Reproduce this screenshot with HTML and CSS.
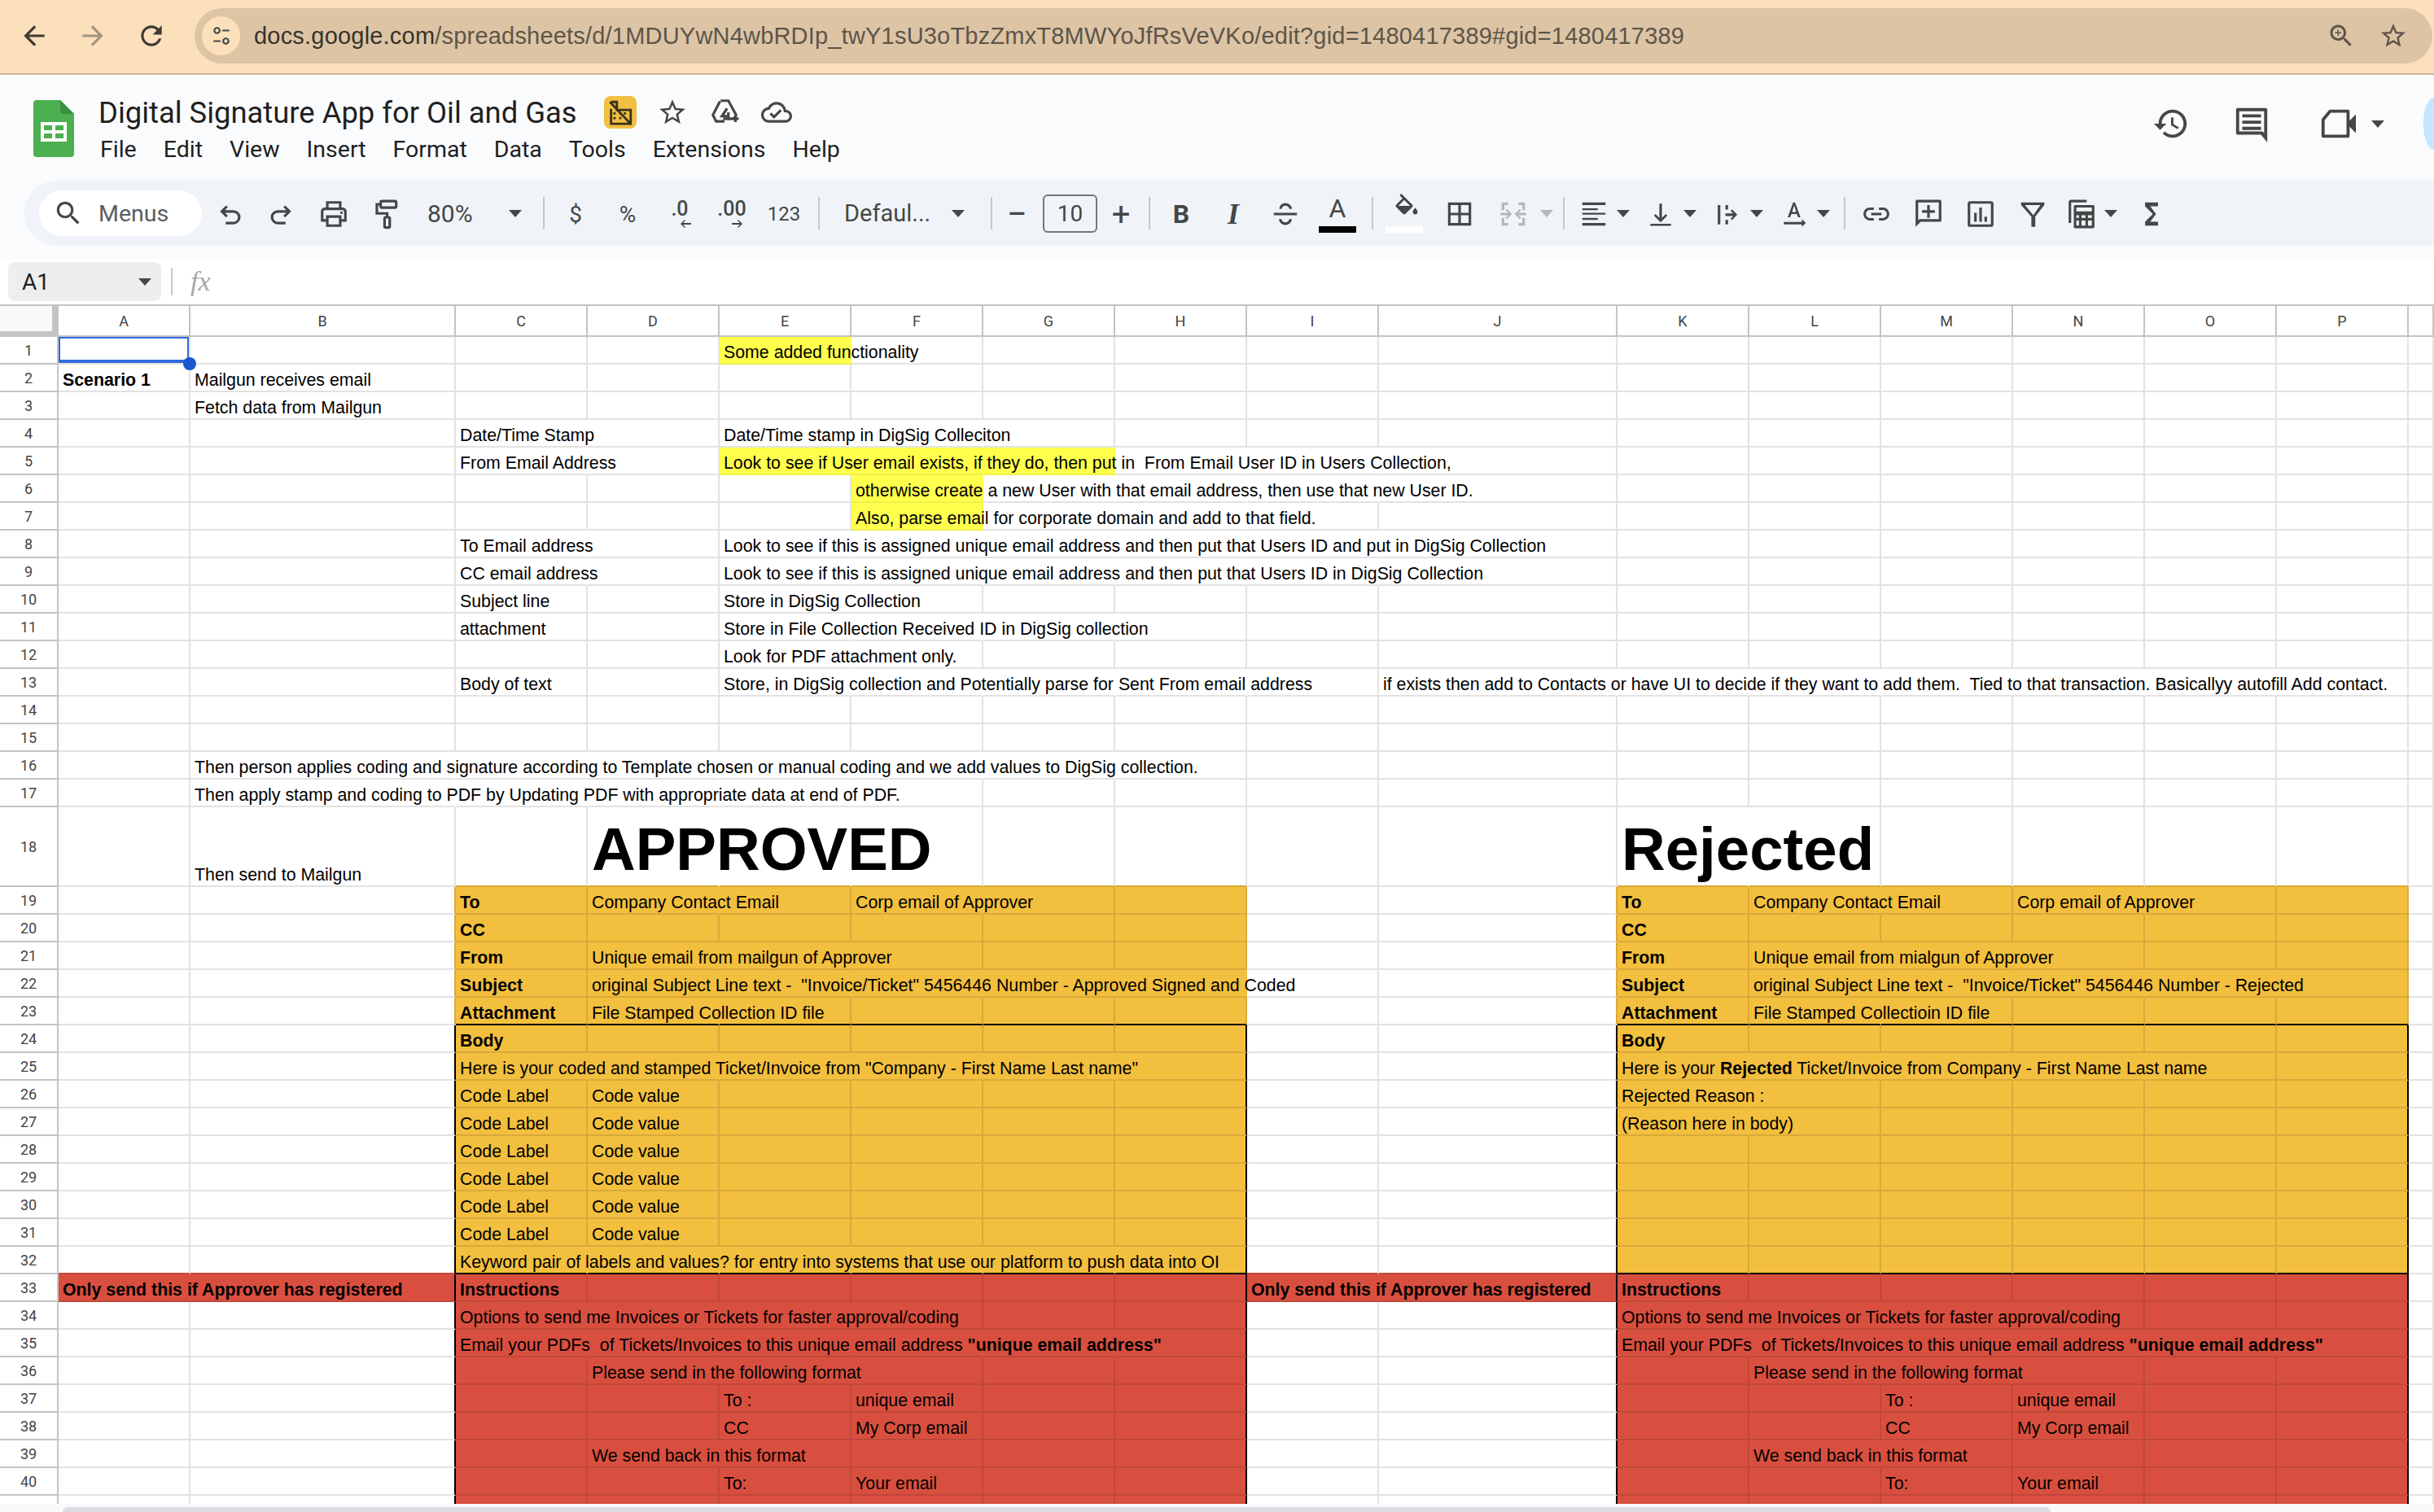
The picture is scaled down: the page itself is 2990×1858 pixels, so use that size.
FILE: index.html
```html
<!DOCTYPE html>
<html lang="en">
<head>
    <meta charset="UTF-8">
    <title>Digital Signature App for Oil and Gas - Google Sheets</title>
    <link rel="stylesheet" href="styles.css">
</head>
<body>
    <header class="browser-bar">
        <button class="nav-btn"><svg class="ic" viewBox="0 0 24 24"><path d="M20 11H7.83l5.59-5.59L12 4l-8 8 8 8 1.41-1.41L7.83 13H20v-2z"/></svg></button>
        <button class="nav-btn muted"><svg class="ic" viewBox="0 0 24 24"><path d="M12 4l-1.41 1.41L16.17 11H4v2h12.17l-5.58 5.59L12 20l8-8z"/></svg></button>
        <button class="nav-btn"><svg class="ic" viewBox="0 0 24 24"><path d="M17.65 6.35C16.2 4.9 14.21 4 12 4c-4.42 0-7.99 3.58-7.99 8s3.57 8 7.99 8c3.73 0 6.84-2.55 7.73-6h-2.08c-.82 2.33-3.04 4-5.65 4-3.31 0-6-2.69-6-6s2.69-6 6-6c1.66 0 3.14.69 4.22 1.78L13 11h7V4l-2.35 2.35z"/></svg></button>
        <div class="address">
            <span class="site-info"><svg class="ic-sm" viewBox="0 0 24 24"><g class="line"><circle cx="7" cy="6" r="3"/><path d="M13 6h8M3 18h8"/><circle cx="17" cy="18" r="3"/></g></svg></span>
            <span class="url"><span class="host">docs.google.com</span>/spreadsheets/d/1MDUYwN4wbRDIp_twY1sU3oTbzZmxT8MWYoJfRsVeVKo/edit?gid=1480417389#gid=1480417389</span>
            <button class="addr-btn"><svg class="ic-addr" viewBox="0 0 24 24"><path d="M15.5 14h-.79l-.28-.27C15.41 12.59 16 11.11 16 9.5 16 5.91 13.09 3 9.5 3S3 5.91 3 9.5 5.91 16 9.5 16c1.61 0 3.09-.59 4.23-1.57l.27.28v.79l5 4.99L20.49 19l-4.99-5zm-6 0C7.01 14 5 11.99 5 9.5S7.01 5 9.5 5 14 7.01 14 9.5 11.99 14 9.5 14zm2.5-4h-2v2H9v-2H7V9h2V7h1v2h2v1z"/></svg></button>
            <button class="addr-btn"><svg class="ic-addr" viewBox="0 0 24 24"><path d="M22 9.24l-7.19-.62L12 2 9.19 8.63 2 9.24l5.46 4.73L5.82 21 12 17.27 18.18 21l-1.63-7.03L22 9.24zM12 15.4l-3.76 2.27 1-4.28-3.32-2.88 4.38-.38L12 6.1l1.71 4.04 4.38.38-3.32 2.88 1 4.28L12 15.4z"/></svg></button>
        </div>
    </header>

    <section class="doc-head">
        <div class="doc-bar">
            <svg class="sheets-logo" viewBox="0 0 50 70">
                <path fill="#4caf50" d="M4 0h29l17 17v49a4 4 0 0 1-4 4H4a4 4 0 0 1-4-4V4a4 4 0 0 1 4-4z"/>
                <path fill="#3a9140" d="M33 0l17 17H37a4 4 0 0 1-4-4z"/>
                <path fill="#fff" fill-rule="evenodd" d="M9 27h32v24H9zM13 31v6h10v-6zm14 0v6h10v-6zM13 41v6h10v-6zm14 0v6h10v-6z"/>
            </svg>
            <div class="doc-titles">
                <div class="title-row">
                    <span class="doc-title">Digital Signature App for Oil and Gas</span>
                    <span class="badge"><svg class="ic-badge" viewBox="0 0 24 24"><g class="line dark"><path d="M3 3l18 19"/><path d="M4 9v13h17V10H9V3H4"/></g><path d="M6 12h2v2H6zM6 16h2v2H6zM11 16h2v2h-2zM15 12h2v2h-2zM11 12h2v2h-2z"/></svg></span>
                    <button class="head-btn"><svg class="ic" viewBox="0 0 24 24"><path d="M22 9.24l-7.19-.62L12 2 9.19 8.63 2 9.24l5.46 4.73L5.82 21 12 17.27 18.18 21l-1.63-7.03L22 9.24zM12 15.4l-3.76 2.27 1-4.28-3.32-2.88 4.38-.38L12 6.1l1.71 4.04 4.38.38-3.32 2.88 1 4.28L12 15.4z"/></svg></button>
                    <button class="head-btn"><svg class="ic" viewBox="0 0 24 24"><g class="line"><path d="M9 3h6l6 11-1.5 3H11M8.5 3.5L3 14l2.500 5H12"/><path d="M14 9l-4 6h6M15 12v6M18 17h5M20.500 14.500v5"/></g></svg></button>
                    <button class="head-btn"><svg class="ic" viewBox="0 0 24 24"><path d="M19.35 10.04C18.67 6.59 15.64 4 12 4 9.11 4 6.6 5.64 5.35 8.04 2.34 8.36 0 10.91 0 14c0 3.31 2.69 6 6 6h13c2.76 0 5-2.24 5-5 0-2.64-2.05-4.78-4.65-4.96zM19 18H6c-2.21 0-4-1.79-4-4 0-2.05 1.53-3.76 3.56-3.97l1.07-.11.5-.95C8.08 7.14 9.94 6 12 6c2.62 0 4.88 1.86 5.39 4.43l.3 1.5 1.53.11c1.56.1 2.78 1.41 2.78 2.96 0 1.65-1.35 3-3 3zm-9-3.82l-2.09-2.09L6.5 13.5 10 17l6.01-6.01-1.41-1.41z"/></svg></button>
                </div>
                <nav class="menu">
                    <span>File</span><span>Edit</span><span>View</span><span>Insert</span><span>Format</span><span>Data</span><span>Tools</span><span>Extensions</span><span>Help</span>
                </nav>
            </div>
            <div class="doc-actions">
                <button class="action-btn"><svg class="ic-lg" viewBox="0 0 24 24"><path d="M13 3c-4.97 0-9 4.03-9 9H1l3.89 3.89.07.14L9 12H6c0-3.87 3.13-7 7-7s7 3.13 7 7-3.13 7-7 7c-1.93 0-3.68-.79-4.94-2.06l-1.42 1.42C8.27 19.99 10.51 21 13 21c4.97 0 9-4.03 9-9s-4.03-9-9-9zm-1 5v5l4.28 2.54.72-1.21-3.5-2.08V8H12z"/></svg></button>
                <button class="action-btn"><svg class="ic-lg" viewBox="0 0 24 24"><path d="M3 2h18a1 1 0 0 1 1 1v21l-4-5H3a1 1 0 0 1-1-1V3a1 1 0 0 1 1-1zm1 2v13h15l1 1V4zm2 2h12v2H6zm0 4h12v2H6zm0 4h12v2H6z"/></svg></button>
                <button class="video-btn"><svg class="ic-lg" viewBox="0 0 24 24"><path d="M7 3h12a1 1 0 0 1 1 1v6l4-4v12l-4-4v6a1 1 0 0 1-1 1H3a1 1 0 0 1-1-1V9zm1 2L4 9.800V19h14V5z"/></svg></button>
                <span class="caret video-caret"></span>
                <span class="avatar"></span>
            </div>
        </div>

        <div class="toolbar">
            <div class="menu-search">
                <svg class="ic" viewBox="0 0 24 24"><path d="M15.5 14h-.79l-.28-.27C15.41 12.59 16 11.11 16 9.5 16 5.91 13.09 3 9.5 3S3 5.91 3 9.5 5.91 16 9.5 16c1.61 0 3.09-.59 4.23-1.57l.27.28v.79l5 4.99L20.49 19l-4.99-5zm-6 0C7.01 14 5 11.99 5 9.5S7.01 5 9.5 5 14 7.01 14 9.5 11.99 14 9.5 14z"/></svg>
                <span>Menus</span>
            </div>
            <button class="tb"><svg class="ic" viewBox="0 0 24 24"><path class="line" d="M10 6L6 10l4 4M6 10h9a4.500 4.500 0 0 1 0 9H9"/></svg></button>
            <button class="tb"><svg class="ic" viewBox="0 0 24 24"><path class="line" d="M14 6l4 4-4 4M18 10H9a4.500 4.500 0 0 0 0 9h6"/></svg></button>
            <button class="tb"><svg class="ic" viewBox="0 0 24 24"><g class="line"><path d="M7 8V3h10v5M7 17H3v-7a2 2 0 0 1 2-2h14a2 2 0 0 1 2 2v7h-4M7 14h10v7H7z"/></g><circle cx="18" cy="11" r="1"/></svg></button>
            <button class="tb"><svg class="ic" viewBox="0 0 24 24"><g class="line"><rect x="8" y="2" width="12" height="5" rx="1"/><path d="M8 4.500H5v7h8v3"/><rect x="11" y="14.500" width="4" height="8" rx="1"/></g></svg></button>
            <div class="dropdown zoom-dd"><span>80%</span><span class="caret"></span></div>
            <span class="sep"></span>
            <button class="tb">$</button>
            <button class="tb">%</button>
            <button class="tb"><span class="dec">.0<svg viewBox="0 0 16 12"><path d="M7 1L2 6l5 5 1-1-3-3h10V5H5l3-3z"/></svg></span></button>
            <button class="tb"><span class="dec">.00<svg viewBox="0 0 16 12"><path d="M9 1l5 5-5 5-1-1 3-3H1V5h10L8 2z"/></svg></span></button>
            <button class="tb tb-num">123</button>
            <span class="sep"></span>
            <div class="dropdown font-dd"><span>Defaul...</span><span class="caret"></span></div>
            <span class="sep"></span>
            <button class="tb tb-thin">&minus;</button>
            <span class="size-box">10</span>
            <button class="tb tb-thin tb-plus">+</button>
            <span class="sep"></span>
            <button class="tb tb-bold">B</button>
            <button class="tb tb-italic">I</button>
            <button class="tb"><svg class="ic" viewBox="0 0 24 24"><g class="line"><path d="M3 12h18M16 8c0-2-2-3.500-4-3.500S8 6 8.500 8M8 16c0 2 2 3.500 4 3.500s4-1.500 4-3.500"/></g></svg></button>
            <button class="tb tb-color"><span class="letter">A</span><span class="color-bar"></span></button>
            <span class="sep sep-fill"></span>
            <button class="tb tb-color"><svg class="ic-fill" viewBox="0 0 24 24"><path d="M16.56 8.94L7.62 0 6.21 1.41l2.38 2.38-5.15 5.15c-.59.59-.59 1.54 0 2.12l5.5 5.5c.29.29.68.44 1.06.44s.77-.15 1.06-.44l5.5-5.5c.59-.58.59-1.53 0-2.120zM5.21 10L10 5.21 14.79 10H5.210zM19 11.500s-2 2.170-2 3.500c0 1.100.9 2 2 2s2-.9 2-2c0-1.330-2-3.500-2-3.500z"/><path d="M5 10h10l-5 5.500z"/></svg><span class="color-bar white"></span></button>
            <button class="tb tb-borders"><svg class="ic" viewBox="0 0 24 24"><path d="M3 3v18h18V3H3zm8 16H5v-6h6v6zm0-8H5V5h6v6zm8 8h-6v-6h6v6zm0-8h-6V5h6v6z"/></svg></button>
            <button class="tb tb-merge"><svg class="ic disabled" viewBox="0 0 24 24"><path d="M3 3h5v2H5v4H3zM16 3h5v6h-2V5h-3zM3 15h2v4h3v2H3zM19 15h2v6h-5v-2h3zM2 11h6l-2-2 1-1 4 4-4 4-1-1 2-2H2zM22 11h-6l2-2-1-1-4 4 4 4 1-1-2-2h6z"/></svg></button>
            <span class="caret caret-btn disabled-caret"></span>
            <span class="sep sep-after-merge"></span>
            <button class="tb tb-pair"><svg class="ic" viewBox="0 0 24 24"><path d="M3 3h18v2H3zM3 7.500h12v1.500H3zM3 11h18v1.500H3zM3 15h12v1.500H3zM3 19h18v2H3z"/></svg></button>
            <span class="caret caret-btn"></span>
            <button class="tb tb-pair next"><svg class="ic" viewBox="0 0 24 24"><path d="M11 4h2v11l3-3 1.200 1.200L12 18.400l-5.200-5.200L8 12l3 3zM4 19.500h16v1.700H4z"/></svg></button>
            <span class="caret caret-btn"></span>
            <button class="tb tb-pair next"><svg class="ic" viewBox="0 0 24 24"><path d="M4.500 5h2v15h-2zM10.500 5h2v3.500h-2zM10.500 16.500h2V20h-2zM10.500 11.500h6l-2-2 1-1.200 4.200 4.200-4.200 4.200-1-1.200 2-2h-6z"/></svg></button>
            <span class="caret caret-btn"></span>
            <button class="tb tb-pair next"><svg class="ic" viewBox="0 0 24 24"><path d="M12.700 3h-1.500L7 14.500h1.900l.9-2.500h4.300l.9 2.500h1.900zM10.400 10.400L12 5.400l1.600 5zM21 19l-3-3v2.200H4V20h14v2z"/></svg></button>
            <span class="caret caret-btn"></span>
            <span class="sep sep-before-link"></span>
            <button class="tb"><svg class="ic" viewBox="0 0 24 24"><path d="M3.900 12c0-1.710 1.390-3.100 3.100-3.100h3V7H7c-2.760 0-5 2.240-5 5s2.240 5 5 5h3v-1.900H7c-1.710 0-3.100-1.390-3.100-3.100zM8 13h8v-2H8v2zm9-6h-3v1.900h3c1.710 0 3.100 1.390 3.100 3.100s-1.390 3.100-3.100 3.100h-3V17h3c2.760 0 5-2.240 5-5s-2.240-5-5-5z"/></svg></button>
            <button class="tb"><svg class="ic" viewBox="0 0 24 24"><path d="M3 1h18a1 1 0 0 1 1 1v15a1 1 0 0 1-1 1H6l-4 4V2a1 1 0 0 1 1-1zm1 2v14l1-1h15V3zM11 5h2v4h4v2h-4v4h-2v-4H7V9h4z"/></svg></button>
            <button class="tb"><svg class="ic" viewBox="0 0 24 24"><path d="M4 2h16a2 2 0 0 1 2 2v16a2 2 0 0 1-2 2H4a2 2 0 0 1-2-2V4a2 2 0 0 1 2-2zm0 2v16h16V4zM7 11h2v7H7zM11 7h2v11h-2zM15 14h2v4h-2z"/></svg></button>
            <button class="tb"><svg class="ic" viewBox="0 0 24 24"><path d="M3 3h18v2l-7 9v8h-3v-8L3 5zm3 2l6.500 8L18 5z"/></svg></button>
            <button class="tb tb-pair"><svg class="ic" viewBox="0 0 24 24"><path d="M4 1h12v2H4v16H2V3a2 2 0 0 1 2-2zM7 5h14a1 1 0 0 1 1 1v16a1 1 0 0 1-1 1H7a1 1 0 0 1-1-1V6a1 1 0 0 1 1-1zm1 2v3h12V7zM8 13v2h2v-2zm4 0v2h3v-2zm5 0v2h3v-2zM8 17v4h2v-4zm4 0v4h3v-4zm5 0v4h3v-4z"/></svg></button>
            <span class="caret caret-btn"></span>
            <button class="tb tb-sigma"><svg class="ic" viewBox="0 0 24 24"><path d="M17 3H7v3l6 6-6 6v3h10v-3h-6l4.500-6L11 6h6z"/></svg></button>
        </div>
    </section>

    <div class="formula-bar">
        <div class="name-box"><span>A1</span><span class="caret"></span></div>
        <span class="formula-sep"></span>
        <span class="fx">fx</span>
    </div>

    <main class="grid-wrap">
        <table class="sheet">
            <colgroup id="sheet-cols"></colgroup>
            <thead><tr id="sheet-head"></tr></thead>
            <tbody id="sheet-body"></tbody>
        </table>
    </main>
    <div class="h-scroll"><span class="h-thumb"></span></div>

    <script>
        const columnNames = "ABCDEFGHIJKLMNOPQ".split("");
        const columnWidths = [162, 326, 162, 162, 162, 162, 162, 162, 162, 293, 162, 162, 162, 162, 162, 162, 31];
        const ORANGE_LEFT = "CDEFGH", ORANGE_RIGHT = "KLMNOP";

        const bold = (s) => "<b>" + s + "</b>";
        const registered = bold("Only send this if Approver has registered");
        const uniqueAddress = 'Email your PDFs  of Tickets/Invoices to this unique email address ' + bold('"unique email address"');

        const cells = {
            1: { E: "Some added functionality" },
            2: { A: bold("Scenario 1"), B: "Mailgun receives email" },
            3: { B: "Fetch data from Mailgun" },
            4: { C: "Date/Time Stamp", E: "Date/Time stamp in DigSig Colleciton" },
            5: { C: "From Email Address", E: "Look to see if User email exists, if they do, then put in  From Email User ID in Users Collection," },
            6: { F: "otherwise create a new User with that email address, then use that new User ID." },
            7: { F: "Also, parse email for corporate domain and add to that field." },
            8: { C: "To Email address", E: "Look to see if this is assigned unique email address and then put that Users ID and put in DigSig Collection" },
            9: { C: "CC email address", E: "Look to see if this is assigned unique email address and then put that Users ID in DigSig Collection" },
            10: { C: "Subject line", E: "Store in DigSig Collection" },
            11: { C: "attachment", E: "Store in File Collection Received ID in DigSig collection" },
            12: { E: "Look for PDF attachment only." },
            13: { C: "Body of text", E: "Store, in DigSig collection and Potentially parse for Sent From email address", J: "if exists then add to Contacts or have UI to decide if they want to add them.  Tied to that transaction. Basicallyy autofill Add contact." },
            16: { B: "Then person applies coding and signature according to Template chosen or manual coding and we add values to DigSig collection." },
            17: { B: "Then apply stamp and coding to PDF by Updating PDF with appropriate data at end of PDF." },
            18: { B: "Then send to Mailgun", D: '<span class="big">APPROVED</span>', K: '<span class="big">Rejected</span>' },
            19: { C: bold("To"), D: "Company Contact Email", F: "Corp email of Approver", K: bold("To"), L: "Company Contact Email", N: "Corp email of Approver" },
            20: { C: bold("CC"), K: bold("CC") },
            21: { C: bold("From"), D: "Unique email from mailgun of Approver", K: bold("From"), L: "Unique email from mialgun of Approver" },
            22: { C: bold("Subject"), D: 'original Subject Line text -  "Invoice/Ticket" 5456446 Number - Approved Signed and Coded', K: bold("Subject"), L: 'original Subject Line text -  "Invoice/Ticket" 5456446 Number - Rejected' },
            23: { C: bold("Attachment"), D: "File Stamped Collection ID file", K: bold("Attachment"), L: "File Stamped Collectioin ID file" },
            24: { C: bold("Body"), K: bold("Body") },
            25: { C: 'Here is your coded and stamped Ticket/Invoice from "Company - First Name Last name"', K: "Here is your " + bold("Rejected") + " Ticket/Invoice from Company - First Name Last name" },
            26: { C: "Code Label", D: "Code value", K: "Rejected Reason :" },
            27: { C: "Code Label", D: "Code value", K: "(Reason here in body)" },
            28: { C: "Code Label", D: "Code value" },
            29: { C: "Code Label", D: "Code value" },
            30: { C: "Code Label", D: "Code value" },
            31: { C: "Code Label", D: "Code value" },
            32: { C: "Keyword pair of labels and values? for entry into systems that use our platform to push data into OI" },
            33: { A: registered, C: bold("Instructions"), I: registered, K: bold("Instructions") },
            34: { C: "Options to send me Invoices or Tickets for faster approval/coding", K: "Options to send me Invoices or Tickets for faster approval/coding" },
            35: { C: uniqueAddress, K: uniqueAddress },
            36: { D: "Please send in the following format", L: "Please send in the following format" },
            37: { E: "To :", F: "unique email", M: "To :", N: "unique email" },
            38: { E: "CC", F: "My Corp email", M: "CC", N: "My Corp email" },
            39: { D: "We send back in this format", L: "We send back in this format" },
            40: { E: "To:", F: "Your email", M: "To:", N: "Your email" },
        };

        // background of a cell, by row and column letter
        function cellFill(row, col) {
            if (row === 1 && col === "E") return "yellow";
            if (row === 5 && "EFG".includes(col)) return "yellow";
            if ((row === 6 || row === 7) && col === "F") return "yellow";
            const inBlock = ORANGE_LEFT.includes(col) || ORANGE_RIGHT.includes(col);
            if (row >= 19 && row <= 32 && inBlock) return "orange";
            if (row >= 33 && inBlock) return "red";
            if (row === 33 && "ABIJ".includes(col)) return "red";
            return "";
        }

        function edgeClasses(row, col, idx) {
            let out = [];
            const next = columnNames[idx + 1];
            const fill = cellFill(row, col);
            if (row >= 24 && (next === "C" || next === "K" || col === "H" || col === "P")) out.push("right-black");
            else if (row >= 19 && row <= 23 && (next === "C" || next === "K")) out.push("right-orange");
            if ((row === 23 || row === 32) && fill === "orange") out.push("bottom-black");
            if (row === 18 && (ORANGE_LEFT.includes(col) || ORANGE_RIGHT.includes(col))) out.push("bottom-orange");
            if (row === 32 && "ABIJ".includes(col)) out.push("bottom-red");
            return out;
        }

        const colTags = document.getElementById("sheet-cols");
        const headRow = document.getElementById("sheet-head");
        const body = document.getElementById("sheet-body");

        colTags.innerHTML = '<col class="col-rowhead">';
        headRow.innerHTML = '<th class="corner"></th>';
        columnNames.forEach((name, i) => {
            let col = document.createElement("col");
            col.style.width = columnWidths[i] + "px";
            colTags.appendChild(col);
            let th = document.createElement("th");
            th.textContent = i < 16 ? name : "";
            headRow.appendChild(th);
        });

        for (let row = 1; row <= 41; row++) {
            let tr = document.createElement("tr");
            if (row === 18) tr.className = "tall";
            let rowHead = document.createElement("th");
            // row 41 is cut off by the scrollbar before its number shows
            rowHead.textContent = row < 41 ? row : "";
            tr.appendChild(rowHead);
            columnNames.forEach((col, idx) => {
                let td = document.createElement("td");
                let fill = cellFill(row, col);
                if (fill) td.classList.add(fill);
                td.classList.add(...edgeClasses(row, col, idx));
                if (row === 1 && col === "A") td.classList.add("selected");
                let content = (cells[row] || {})[col];
                if (content) td.innerHTML = '<span class="txt">' + content + "</span>";
                tr.appendChild(td);
            });
            body.appendChild(tr);
        }

        // text runs over empty neighbours and takes away their gridline, as in Sheets
        document.querySelectorAll("td .txt").forEach((txt) => {
            let cur = txt.parentElement;
            let room = cur.offsetWidth;
            while (txt.offsetWidth + 6 > room && cur.nextElementSibling && !cur.nextElementSibling.firstChild) {
                cur.classList.add("spill");
                cur = cur.nextElementSibling;
                room += cur.offsetWidth;
            }
        });
    </script>
</body>
</html>
```
FILE: styles.css
```css
* {
    box-sizing: border-box;
}
html, body {
    margin: 0;
    height: 100%;
}
body {
    display: flex;
    flex-direction: column;
    height: 1858px;
    overflow: hidden;
    background-color: #fff;
    font-family: Roboto, sans-serif;
    color: #444746;
}
button {
    border: none;
    background: none;
    padding: 0;
    margin: 0;
    display: flex;
    align-items: center;
    justify-content: center;
    font-family: inherit;
    font-size: inherit;
    color: inherit;
}
svg {
    fill: #444746;
    display: block;
}
.line path, .line circle, .line rect, path.line {
    fill: none;
    stroke: #444746;
    stroke-width: 2;
}
.ic {
    width: 38px;
    height: 38px;
}
.ic-lg {
    width: 46px;
    height: 46px;
}

/* browser chrome */
.browser-bar {
    flex: none;
    height: 92px;
    display: flex;
    align-items: flex-start;
    padding: 10px 2px 0 6px;
    background-color: #fce0bb;
    border-bottom: 2px solid #cdb596;
}
.nav-btn {
    width: 72px;
    height: 68px;
}
.nav-btn svg {
    fill: #3f3a33;
}
.nav-btn.muted svg {
    fill: #a39480;
}
.address {
    flex: 1;
    height: 68px;
    margin-left: 17px;
    padding: 0 16px 0 9px;
    display: flex;
    align-items: center;
    background-color: #dcc4a5;
    border-radius: 34px;
}
.site-info {
    width: 47px;
    height: 48px;
    display: flex;
    align-items: center;
    justify-content: center;
    border-radius: 24px;
    background-color: #fce0bb;
}
.ic-sm {
    width: 26px;
    height: 26px;
}
.url {
    margin-left: 17px;
    font-family: "Liberation Sans", sans-serif;
    font-size: 29px;
    letter-spacing: 0.2px;
    color: #5e5548;
    white-space: nowrap;
}
.host {
    color: #38322a;
}
.addr-btn {
    width: 64px;
    height: 48px;
}
.addr-btn:first-of-type {
    margin-left: auto;
}
.ic-addr {
    width: 36px;
    height: 36px;
    fill: #5e5548;
}

/* document header */
.doc-head {
    flex: none;
    height: 226px;
    background-color: #f9fbfd;
}
.doc-bar {
    height: 130px;
    display: flex;
    align-items: flex-start;
}
.sheets-logo {
    width: 50px;
    height: 70px;
    margin: 31px 0 0 41px;
}
.doc-titles {
    margin: 26px 0 0 30px;
}
.title-row {
    display: flex;
    align-items: center;
    height: 40px;
}
.doc-title {
    font-size: 36.4px;
    color: #1f1f1f;
    white-space: nowrap;
}
.badge {
    width: 40px;
    height: 40px;
    margin: 0 12px 0 33px;
    display: flex;
    align-items: center;
    justify-content: center;
    background-color: #f1bf42;
    border-radius: 8px;
}
.ic-badge {
    width: 34px;
    height: 34px;
    fill: #3a3320;
}
.line.dark path {
    stroke: #3a3320;
}
.head-btn {
    width: 64px;
    height: 40px;
}
.menu {
    margin-top: 5px;
    height: 40px;
    display: flex;
    align-items: center;
    gap: 33px;
    padding-left: 2px;
    font-size: 28.5px;
    color: #1f1f1f;
}
.doc-actions {
    margin-left: auto;
    padding-top: 28px;
    display: flex;
    align-items: center;
}
.action-btn {
    width: 99px;
    height: 64px;
}
.video-btn {
    width: 80px;
    height: 64px;
    margin-left: 16px;
}
.video-caret {
    margin: 0 48px 0 2px;
}
.avatar {
    width: 13px;
    height: 64px;
    background-color: #c2e7ff;
    border-radius: 13px 0 0 13px / 32px 0 0 32px;
}

/* toolbar */
.toolbar {
    height: 80px;
    margin-left: 30px;
    padding-left: 18px;
    display: flex;
    align-items: center;
    background-color: #f0f4f9;
    border-radius: 40px 0 0 40px;
    font-size: 28px;
    color: #444746;
}
.menu-search {
    width: 200px;
    height: 56px;
    margin-right: 2px;
    padding-left: 17px;
    display: flex;
    align-items: center;
    gap: 18px;
    background-color: #fff;
    border-radius: 28px;
    font-size: 28.5px;
    color: #5a5d5e;
}
.tb {
    flex: none;
    width: 64px;
    height: 56px;
    padding-top: 2px;
}
.tb-num {
    font-size: 24px;
    margin-right: 4px;
}
.tb-thin {
    width: 48px;
    font-size: 44px;
}
.tb-plus {
    margin: 0 4px 0 5px;
    font-size: 40px;
}
.tb-bold {
    font-size: 32px;
    font-weight: 700;
}
.tb-italic {
    font-family: "Liberation Serif", serif;
    font-size: 36px;
    font-weight: 700;
    font-style: italic;
}
.tb-color {
    flex-direction: column;
    justify-content: flex-start;
    height: 56px;
    padding-top: 4px;
}
.tb-color .letter {
    font-size: 32px;
    line-height: 36px;
    height: 40px;
}
.color-bar {
    width: 46px;
    height: 8px;
    background-color: #000;
}
.color-bar.white {
    background-color: #fff;
}
.ic-fill {
    width: 36px;
    height: 36px;
    margin: 0 0 4px 6px;
}
.tb-borders {
    margin: 0 3px 0 4px;
}
.disabled {
    fill: #b4b7ba;
}
.tb-merge {
    width: 62px;
}
.tb-pair {
    width: 56px;
}
.tb-pair.next {
    margin-left: 10px;
}
.tb-sigma {
    margin-left: 10px;
}
.dec {
    display: flex;
    flex-direction: column;
    align-items: center;
    font-size: 25px;
    font-weight: 500;
    line-height: 24px;
}
.dec svg {
    width: 18px;
    height: 12px;
    margin: 0 0 0 14px;
}
.dropdown {
    flex: none;
    display: flex;
    align-items: center;
    justify-content: space-between;
    height: 56px;
}
.zoom-dd {
    width: 155px;
    padding: 0 20px 0 19px;
    font-size: 30px;
}
.font-dd {
    width: 198px;
    padding: 0 26px 0 24px;
    font-size: 29px;
}
.caret {
    display: inline-block;
    width: 0;
    height: 0;
    border-left: 8px solid transparent;
    border-right: 8px solid transparent;
    border-top: 9px solid #444746;
}
.caret-btn {
    flex: none;
    margin: 0;
}
.disabled-caret {
    border-top-color: #b4b7ba;
    margin-left: 2px;
}
.sep {
    flex: none;
    width: 2px;
    height: 40px;
    margin: 0 6px;
    background-color: #c7c7c7;
}
.sep-fill {
    margin-left: 10px;
}
.sep-after-merge {
    margin: 0 8px 0 12px;
}
.sep-before-link {
    margin-left: 17px;
}
.size-box {
    flex: none;
    width: 67px;
    height: 47px;
    margin-left: 8px;
    display: flex;
    align-items: center;
    justify-content: center;
    border: 2px solid #747775;
    border-radius: 6px;
    font-size: 28px;
}

/* formula bar */
.formula-bar {
    flex: none;
    height: 56px;
    display: flex;
    align-items: center;
    background-color: #fff;
}
.name-box {
    width: 188px;
    height: 48px;
    margin-left: 10px;
    padding: 0 12px 0 17px;
    display: flex;
    align-items: center;
    justify-content: space-between;
    background-color: #eeeeee;
    border-radius: 8px;
    font-size: 28px;
    color: #1f1f1f;
}
.formula-sep {
    width: 2px;
    height: 34px;
    margin-left: 12px;
    background-color: #c7c7c7;
}
.fx {
    margin-left: 22px;
    font-family: "Liberation Serif", serif;
    font-style: italic;
    font-size: 34px;
    color: #a8a8a8;
}

/* sheet */
.grid-wrap {
    flex: 1;
    overflow: hidden;
    min-height: 0;
}
.sheet {
    table-layout: fixed;
    width: 2990px;
    border-collapse: separate;
    border-spacing: 0;
    font-family: "Liberation Sans", Arial, sans-serif;
    font-size: 21.33px;
    color: #000;
}
.col-rowhead {
    width: 72px;
}
.sheet thead th {
    height: 40px;
    border-top: 2px solid #c4c4c4;
    border-bottom: 2px solid #c4c4c4;
    border-right: 2px solid #c4c4c4;
    font-family: Roboto, sans-serif;
    font-size: 18px;
    font-weight: 400;
    color: #444;
    background-color: #fff;
}
.sheet thead th.corner {
    background-color: #f8f9fa;
    border-right: 8px solid #c4c4c4;
    border-bottom: 7px solid #c4c4c4;
}
.sheet tbody th {
    height: 34px;
    border-right: 2px solid #c4c4c4;
    border-bottom: 2px solid #c4c4c4;
    font-family: Roboto, sans-serif;
    font-size: 18px;
    font-weight: 400;
    color: #444;
    background-color: #fff;
}
.sheet tbody tr.tall th {
    height: 98px;
}
.sheet td {
    height: 34px;
    padding: 0 0 0 5px;
    border-right: 2px solid #e2e2e2;
    border-bottom: 2px solid #e2e2e2;
    vertical-align: bottom;
    white-space: pre;
    overflow: visible;
    line-height: 25px;
}
.sheet td.yellow {
    background-color: #ffff4d;
    border-color: #f0f04a;
}
.sheet td.orange {
    background-color: #f3bf3e;
    border-color: #d9a93a;
}
.sheet td.red {
    background-color: #d94f3f;
    border-color: #c0473a;
}
.sheet td.spill {
    border-right-color: transparent;
}
.sheet td.right-black {
    border-right-color: #000;
}
.sheet td.right-orange {
    border-right-color: #d9a93a;
}
.sheet td.bottom-black {
    border-bottom-color: #000;
}
.sheet td.bottom-orange {
    border-bottom-color: #d9a93a;
}
.sheet td.bottom-red {
    border-bottom-color: #c0473a;
}
.sheet td.selected {
    position: relative;
    box-shadow: inset 0 0 0 2px #2f6bdd, inset 0 -2px 0 2px #2f6bdd;
}
.sheet td.selected::after {
    content: "";
    position: absolute;
    right: -9px;
    bottom: -9px;
    width: 16px;
    height: 16px;
    border-radius: 50%;
    background-color: #1a56cc;
    z-index: 1;
}
.big {
    font-size: 74.4px;
    font-weight: 700;
    line-height: 88px;
}

.h-scroll {
    flex: none;
    height: 10px;
    padding: 4px 0 0 77px;
    background-color: #f8f9fa;
}
.h-thumb {
    display: block;
    width: 2442px;
    height: 6px;
    background-color: #dadce0;
    border-radius: 6px 6px 0 0;
}
```
